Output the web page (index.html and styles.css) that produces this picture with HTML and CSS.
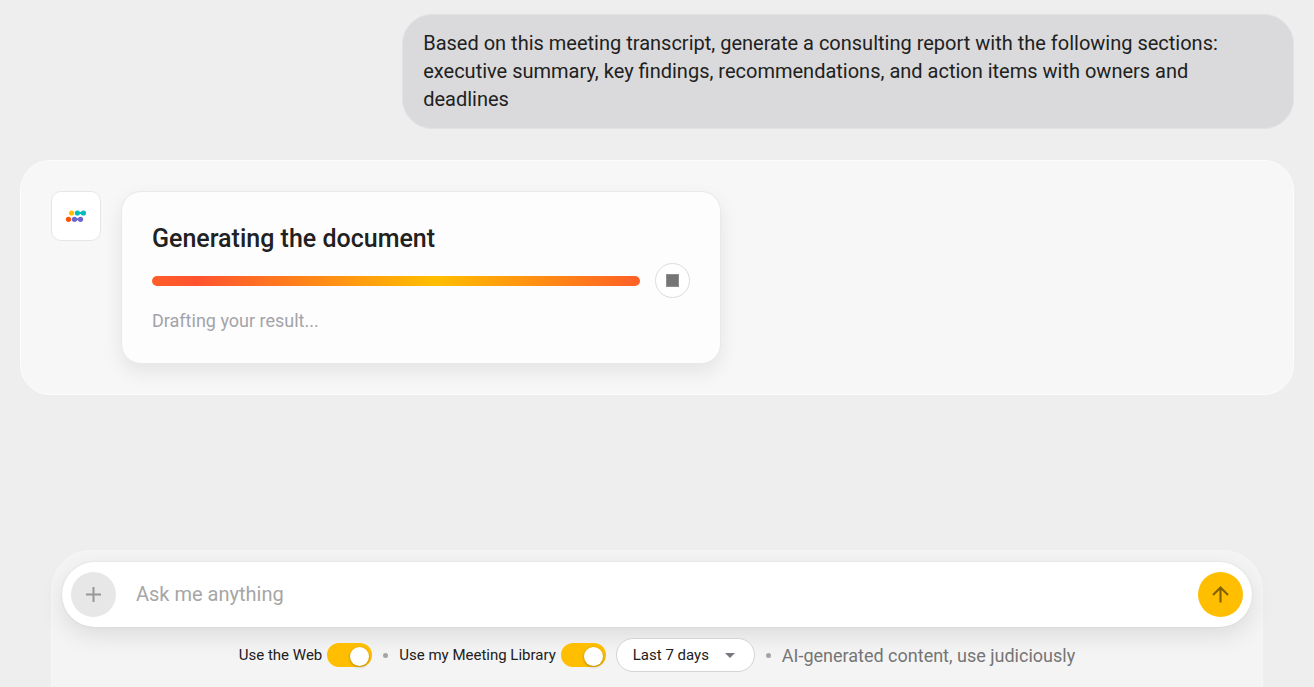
FILE: index.html
```html
<!DOCTYPE html>
<html lang="en">
<head>
<meta charset="UTF-8" />
<meta name="viewport" content="width=device-width, initial-scale=1" />
<title>Assistant</title>
<link rel="stylesheet" href="styles.css">
</head>
<body>

<main class="chat">
  <div class="message-user">Based on this meeting transcript, generate a consulting report with the following sections: executive summary, key findings, recommendations, and action items with owners and deadlines</div>

  <section class="message-bot">
    <div class="avatar">
      <svg width="22" height="14" viewBox="0 0 22 14" aria-hidden="true">
        <circle cx="6.6" cy="4" r="2.6" fill="#ffbe00" />
        <path d="M12.4 4h6" stroke="#00bdbd" stroke-width="2" />
        <circle cx="12.4" cy="4" r="2.6" fill="#00bdbd" />
        <circle cx="18.4" cy="4" r="2.6" fill="#00bdbd" />
        <circle cx="3.5" cy="10.3" r="2.6" fill="#ff5005" />
        <path d="M9.5 10.3h6" stroke="#6b65d0" stroke-width="2" />
        <circle cx="9.5" cy="10.3" r="2.6" fill="#6b65d0" />
        <circle cx="15.5" cy="10.3" r="2.6" fill="#6b65d0" />
      </svg>
    </div>
    <div class="card">
      <h2 class="card-title">Generating the document</h2>
      <div class="progress-row">
        <div class="progress" role="progressbar" aria-label="Generating the document"></div>
        <button class="stop-btn" type="button" aria-label="Stop">
          <span class="stop-icon"></span>
        </button>
      </div>
      <p class="card-status">Drafting your result...</p>
    </div>
  </section>
</main>

<form class="composer">
  <div class="prompt">
    <button class="round-btn add-btn" type="button" aria-label="Add">
      <svg width="15" height="15" viewBox="0 0 15 15" aria-hidden="true">
        <path d="M7.500 0v15M0 7.500h15" stroke="#969696" stroke-width="2" />
      </svg>
    </button>
    <input class="prompt-input" type="text" placeholder="Ask me anything" aria-label="Ask me anything" />
    <button class="round-btn send-btn" type="submit" aria-label="Send">
      <svg width="17" height="17" viewBox="0 0 17 17" fill="none" aria-hidden="true">
        <path d="M8.500 16.500V1.500M1 9l7.500-7.500L16 9" stroke="#806000" stroke-width="2.100" />
      </svg>
    </button>
  </div>

  <div class="options">
    <label class="option">Use the Web<input class="switch" type="checkbox" checked /></label>
    <span class="dot"></span>
    <label class="option">Use my Meeting Library<input class="switch" type="checkbox" checked /></label>
    <span class="select-wrap">
      <select class="range" aria-label="Meeting period">
        <option>Last 7 days</option>
        <option>Last 30 days</option>
      </select>
      <svg class="caret" width="10" height="5" viewBox="0 0 10 5" aria-hidden="true">
        <path d="M0 0h10L5 5z" fill="#77777f" />
      </svg>
    </span>
    <span class="dot"></span>
    <span class="notice">AI-generated content, use judiciously</span>
  </div>
</form>

</body>
</html>
```
FILE: styles.css
```css
* {
  box-sizing: border-box;
}
body {
  margin: 0;
  min-height: 100vh;
  display: flex;
  flex-direction: column;
  font-family: Roboto, "Liberation Sans", sans-serif;
  background-color: #eeeeee;
  color: #212121;
}
button {
  display: flex;
  align-items: center;
  justify-content: center;
  flex-shrink: 0;
  padding: 0;
  border: none;
  border-radius: 50%;
  cursor: pointer;
}
.chat {
  flex: 1;
  display: flex;
  flex-direction: column;
  gap: 31px;
  padding: 14px 20px;
}
.message-user {
  align-self: flex-end;
  width: 70%;
  padding: 14px 20px 15px;
  border: 1px solid #e2e2e3;
  border-radius: 30px;
  background-color: #dadadc;
  font-size: 20px;
  line-height: 28px;
}
.message-bot {
  display: flex;
  gap: 20px;
  padding: 30px;
  border: 1px solid #fcfcfc;
  border-radius: 30px;
  background-color: #f7f7f7;
}
.avatar {
  display: flex;
  align-items: center;
  justify-content: center;
  flex-shrink: 0;
  width: 50px;
  height: 50px;
  border: 1px solid #e6e6e6;
  border-radius: 10px;
  background-color: #fff;
}
.card {
  flex: 0 1 600px;
  padding: 30px;
  border: 1px solid #e9e9e9;
  border-radius: 20px;
  background-color: #fdfdfd;
  box-shadow: 0 8px 20px rgba(0, 0, 0, 0.08);
}
.card-title {
  margin: 0 0 8px;
  font-size: 25px;
  font-weight: 500;
  line-height: 33px;
}
.progress-row {
  display: flex;
  align-items: center;
  gap: 15px;
}
.progress {
  flex: 1;
  height: 10px;
  border-radius: 5px;
  background: linear-gradient(90deg, #ff5e28, #ff5330 9%, #ffbe00 58%, #ff5f26);
}
.stop-btn {
  width: 35px;
  height: 35px;
  border: 1px solid #dcdcde;
  background-color: #fff;
}
.stop-icon {
  width: 13px;
  height: 13px;
  border: 1px solid #8e8e8e;
  background-color: #757575;
}
.card-status {
  margin: 11px 0 0;
  color: #a3a3aa;
  font-size: 18px;
  line-height: 24px;
}
.composer {
  margin: 0 51px;
  padding: 11px 10px 15px;
  border: 1px solid #f6f6f6;
  border-bottom: none;
  border-radius: 40px 40px 0 0;
  background-color: #f4f4f4;
}
.prompt {
  display: flex;
  align-items: center;
  gap: 20px;
  padding: 10px 9px;
  border-radius: 33px;
  background-color: #fff;
  box-shadow: 0 8px 24px rgba(0, 0, 0, 0.1), 0 0 2px rgba(0, 0, 0, 0.1);
}
.round-btn {
  width: 45px;
  height: 45px;
}
.add-btn {
  background-color: #e7e7e7;
}
.send-btn {
  background-color: #ffbe00;
}
.prompt-input {
  flex: 1;
  min-width: 0;
  padding: 0 0 2px;
  border: none;
  outline: none;
  background: none;
  color: #212121;
  font-family: inherit;
  font-size: 20px;
  line-height: 28px;
}
.prompt-input::placeholder {
  color: #a6a6a6;
}
.options {
  display: flex;
  flex-wrap: wrap;
  align-items: center;
  justify-content: center;
  gap: 10px;
  margin-top: 11px;
  font-size: 15px;
}
.option {
  display: flex;
  align-items: center;
  gap: 5px;
}
.switch {
  appearance: none;
  display: flex;
  align-items: center;
  justify-content: flex-end;
  width: 45px;
  height: 24px;
  margin: 0;
  padding: 2px 3px 0;
  border-radius: 12px;
  background-color: #ffbe00;
  cursor: pointer;
}
.switch::before {
  content: "";
  width: 19px;
  height: 19px;
  border-radius: 50%;
  background-color: #fff;
  box-shadow: 0 1px 3px rgba(0, 0, 0, 0.3);
}
.switch:not(:checked) {
  justify-content: flex-start;
  background-color: #c4c4c8;
}
.dot {
  width: 5px;
  height: 5px;
  margin: 0 1px;
  border-radius: 50%;
  background-color: #a3a3aa;
}
.select-wrap {
  position: relative;
}
.range {
  appearance: none;
  display: block;
  width: 139px;
  height: 34px;
  padding: 0 30px 0 16px;
  border: 1px solid #d4d4d6;
  border-radius: 17px;
  background-color: #fff;
  color: #212121;
  font-family: inherit;
  font-size: 15px;
}
.caret {
  position: absolute;
  top: 15px;
  right: 20px;
  pointer-events: none;
}
.notice {
  color: #757575;
  font-size: 18px;
}
```
